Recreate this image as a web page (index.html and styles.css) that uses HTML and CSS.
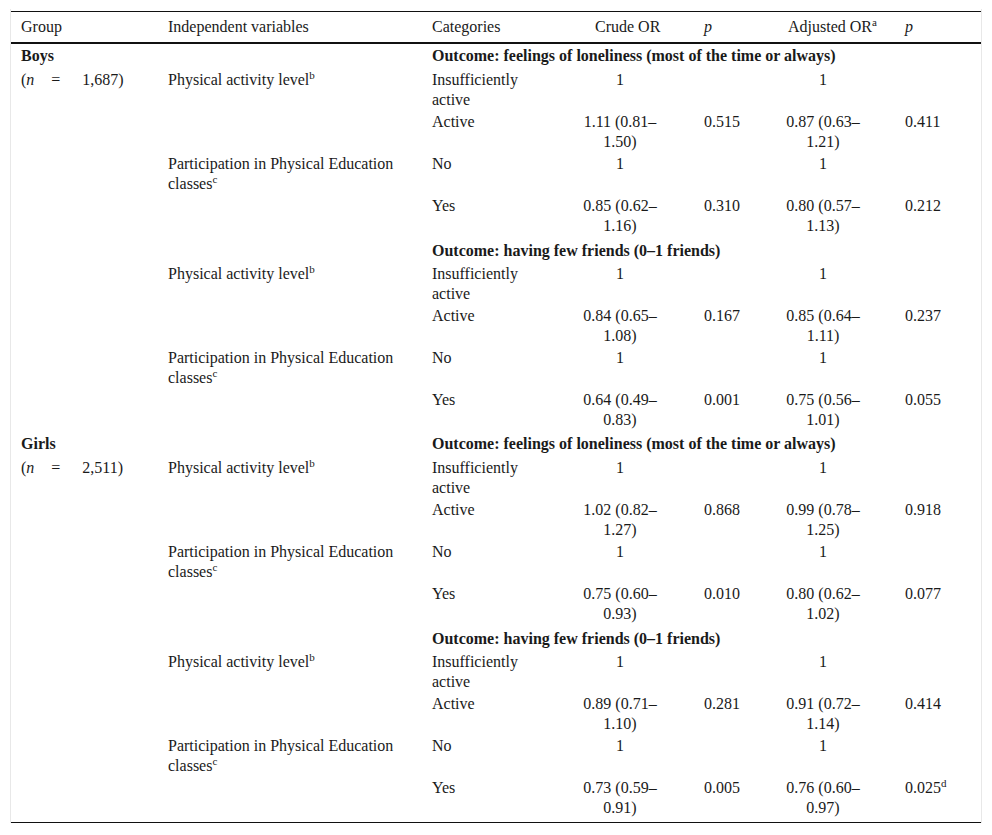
FILE: index.html
```html
<!DOCTYPE html>
<html>
<head>
<meta charset="utf-8">
<link rel="stylesheet" href="styles.css">
</head>
<body>
<div class="wrap">
<table class="tbl">
<colgroup>
<col class="c1"><col class="c2"><col class="c3"><col class="c4"><col class="c5"><col class="c6"><col class="c7">
</colgroup>
<thead>
<tr>
<th class="h-grp">Group</th>
<th class="h-iv">Independent variables</th>
<th class="h-cat">Categories</th>
<th class="h-crude">Crude OR</th>
<th class="h-p1"><i>p</i></th>
<th class="h-adj">Adjusted OR<sup>a</sup></th>
<th class="h-p2"><i>p</i></th>
</tr>
</thead>
<tbody>
<tr class="grp first">
<td class="grp-name"><b>Boys</b></td><td></td>
<td colspan="5" class="outcome">Outcome: feelings of loneliness (most of the time or always)</td>
</tr>
<tr>
<td class="nval"><span>(<i>n</i></span><span class="eq">=</span><span class="num">1,687)</span></td>
<td class="iv">Physical activity level<sup>b</sup></td>
<td class="cat">Insufficiently active</td>
<td class="or">1</td><td class="pv"></td><td class="or2">1</td><td class="pv2"></td>
</tr>
<tr>
<td></td><td></td><td class="cat">Active</td>
<td class="or">1.11 (0.81–1.50)</td><td class="pv">0.515</td><td class="or2">0.87 (0.63–1.21)</td><td class="pv2">0.411</td>
</tr>
<tr>
<td></td><td class="iv">Participation in Physical Education classes<sup>c</sup></td><td class="cat">No</td>
<td class="or">1</td><td class="pv"></td><td class="or2">1</td><td class="pv2"></td>
</tr>
<tr>
<td></td><td></td><td class="cat">Yes</td>
<td class="or">0.85 (0.62–1.16)</td><td class="pv">0.310</td><td class="or2">0.80 (0.57–1.13)</td><td class="pv2">0.212</td>
</tr>
<tr class="out">
<td></td><td></td>
<td colspan="5" class="outcome">Outcome: having few friends (0–1 friends)</td>
</tr>
<tr>
<td></td><td class="iv">Physical activity level<sup>b</sup></td><td class="cat">Insufficiently active</td>
<td class="or">1</td><td class="pv"></td><td class="or2">1</td><td class="pv2"></td>
</tr>
<tr>
<td></td><td></td><td class="cat">Active</td>
<td class="or">0.84 (0.65–1.08)</td><td class="pv">0.167</td><td class="or2">0.85 (0.64–1.11)</td><td class="pv2">0.237</td>
</tr>
<tr>
<td></td><td class="iv">Participation in Physical Education classes<sup>c</sup></td><td class="cat">No</td>
<td class="or">1</td><td class="pv"></td><td class="or2">1</td><td class="pv2"></td>
</tr>
<tr>
<td></td><td></td><td class="cat">Yes</td>
<td class="or">0.64 (0.49–0.83)</td><td class="pv">0.001</td><td class="or2">0.75 (0.56–1.01)</td><td class="pv2">0.055</td>
</tr>
<tr class="grp">
<td class="grp-name"><b>Girls</b></td><td></td>
<td colspan="5" class="outcome">Outcome: feelings of loneliness (most of the time or always)</td>
</tr>
<tr>
<td class="nval"><span>(<i>n</i></span><span class="eq">=</span><span class="num">2,511)</span></td>
<td class="iv">Physical activity level<sup>b</sup></td>
<td class="cat">Insufficiently active</td>
<td class="or">1</td><td class="pv"></td><td class="or2">1</td><td class="pv2"></td>
</tr>
<tr>
<td></td><td></td><td class="cat">Active</td>
<td class="or">1.02 (0.82–1.27)</td><td class="pv">0.868</td><td class="or2">0.99 (0.78–1.25)</td><td class="pv2">0.918</td>
</tr>
<tr>
<td></td><td class="iv">Participation in Physical Education classes<sup>c</sup></td><td class="cat">No</td>
<td class="or">1</td><td class="pv"></td><td class="or2">1</td><td class="pv2"></td>
</tr>
<tr>
<td></td><td></td><td class="cat">Yes</td>
<td class="or">0.75 (0.60–0.93)</td><td class="pv">0.010</td><td class="or2">0.80 (0.62–1.02)</td><td class="pv2">0.077</td>
</tr>
<tr class="out">
<td></td><td></td>
<td colspan="5" class="outcome">Outcome: having few friends (0–1 friends)</td>
</tr>
<tr>
<td></td><td class="iv">Physical activity level<sup>b</sup></td><td class="cat">Insufficiently active</td>
<td class="or">1</td><td class="pv"></td><td class="or2">1</td><td class="pv2"></td>
</tr>
<tr>
<td></td><td></td><td class="cat">Active</td>
<td class="or">0.89 (0.71–1.10)</td><td class="pv">0.281</td><td class="or2">0.91 (0.72–1.14)</td><td class="pv2">0.414</td>
</tr>
<tr>
<td></td><td class="iv">Participation in Physical Education classes<sup>c</sup></td><td class="cat">No</td>
<td class="or">1</td><td class="pv"></td><td class="or2">1</td><td class="pv2"></td>
</tr>
<tr class="last">
<td></td><td></td><td class="cat">Yes</td>
<td class="or">0.73 (0.59–0.91)</td><td class="pv">0.005</td><td class="or2">0.76 (0.60–0.97)</td><td class="pv2">0.025<sup>d</sup></td>
</tr>
</tbody>
</table>
</div>
</body>
</html>
```

FILE: styles.css
```css
html, body {
  margin: 0;
  padding: 0;
  background: #ffffff;
}

body {
  font-family: "Liberation Serif", "Times New Roman", serif;
  font-size: 16px;
  color: #1a1a1a;
}

.wrap {
  margin: 9px 10px 0 10px;
  padding-top: 2px;
  border-left: 1px solid #e8e8e8;
  border-right: 1px solid #e8e8e8;
  width: 970px;
}

.tbl {
  border-collapse: collapse;
  table-layout: fixed;
  width: 970px;
  line-height: 20px;
  border-top: 1px solid #111;
  border-bottom: 1px solid #111;
}

.c1 { width: 147px; }
.c2 { width: 264px; }
.c3 { width: 148px; }
.c4 { width: 110px; }
.c5 { width: 90px; }
.c6 { width: 110px; }
.c7 { width: 101px; }

th {
  font-weight: normal;
  text-align: left;
  white-space: nowrap;
  padding: 5px 0 5px 10px;
  border-bottom: 2px solid #111;
}

th.h-crude { padding-left: 25px; }
th.h-p1 { padding-left: 24px; }
th.h-adj { padding-left: 18px; }
th.h-p2 { padding-left: 25px; }

td {
  vertical-align: top;
  padding: 1px 0 1px 10px;
}

tr.grp td { padding-top: 3px; padding-bottom: 3px; }
tr.grp.first td { padding-top: 2px; padding-bottom: 3px; }
tr.out td { padding-top: 4px; padding-bottom: 2px; }
tr.last td { padding-bottom: 4px; }

.outcome { font-weight: bold; }

td.cat { padding-right: 24px; }

td.or {
  text-align: center;
  padding-left: 10px;
  padding-right: 20px;
}

td.pv { padding-left: 24px; }

td.or2 {
  text-align: center;
  padding-left: 10px;
  padding-right: 14px;
}

td.pv2 { padding-left: 25px; }

td.iv { padding-right: 20px; }

sup {
  font-size: 11px;
  line-height: 0;
  vertical-align: 6px;
}

.nval span { display: inline-block; }
.nval .eq { margin-left: 17px; }
.nval .num { margin-left: 22px; }
```
